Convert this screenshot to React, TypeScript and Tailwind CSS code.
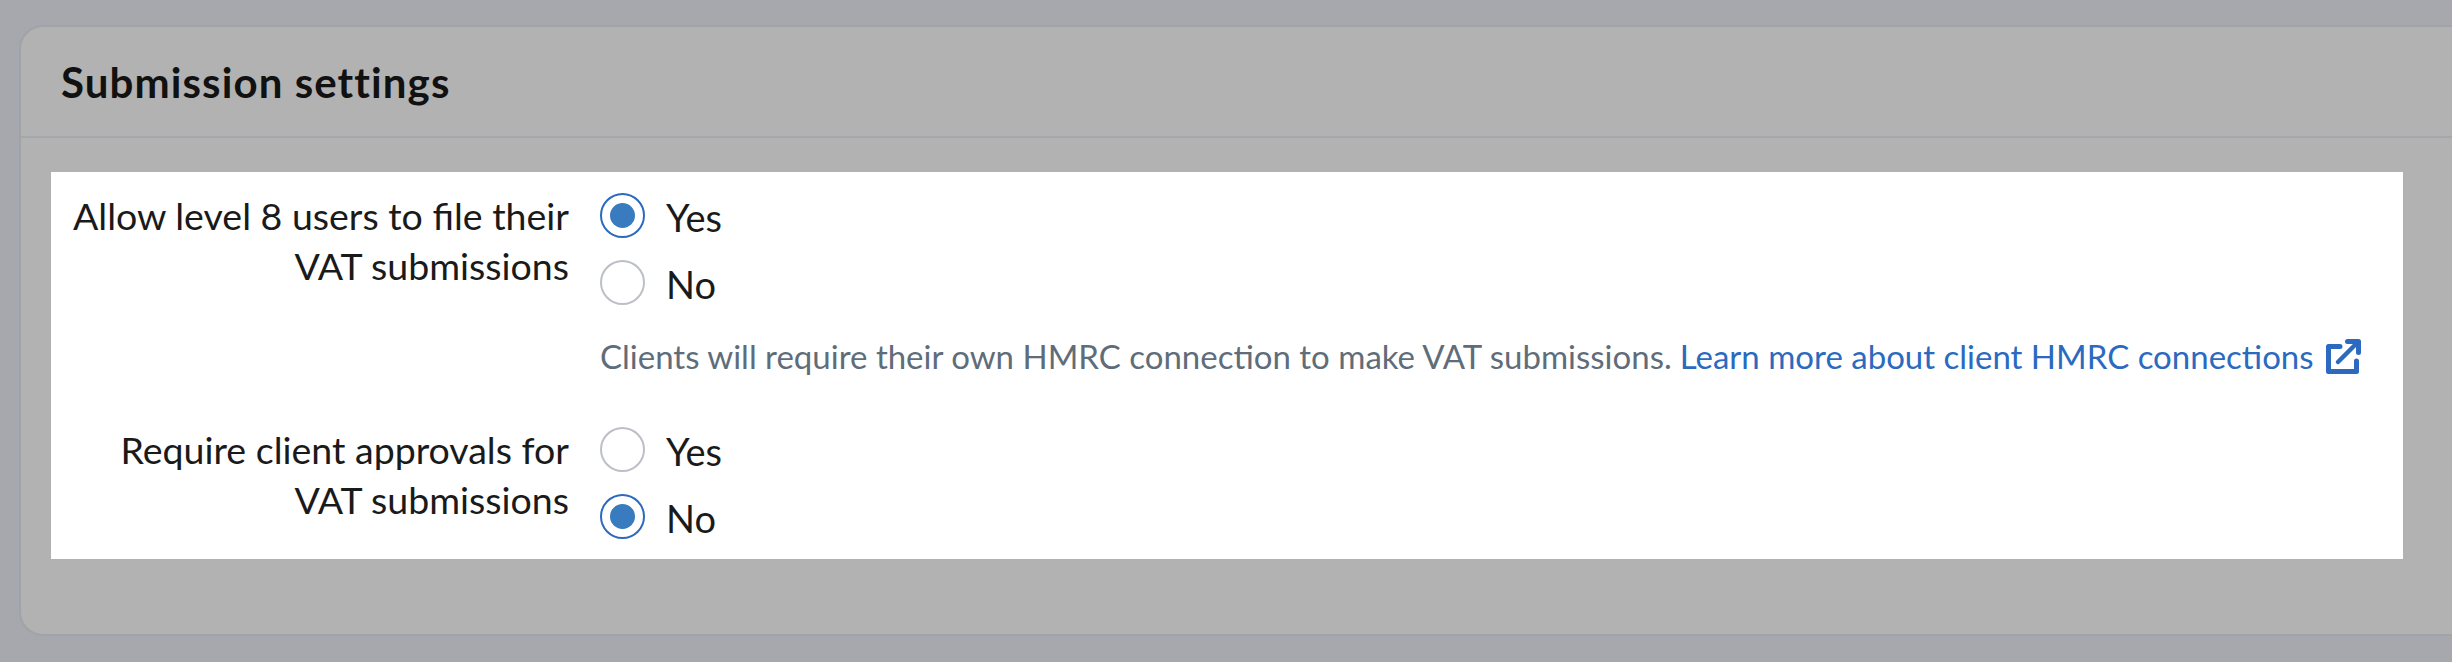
const font = "font-['Lato','Liberation_Sans',sans-serif]";

function Radio({ label, checked }: { label: string; checked?: boolean }) {
  return (
    <div className="flex h-[45px] items-center">
      <span
        className={`flex h-[45px] w-[45px] shrink-0 items-center justify-center rounded-full border-[2px] bg-white ${
          checked ? "border-[#2b6abf]" : "border-[#bcc0c6]"
        }`}
      >
        {checked && <span className="h-[25px] w-[25px] rounded-full bg-[#387bbf]" />}
      </span>
      <span className="ml-[21px] pt-[3px] text-[38px] leading-[50px] text-[#1a1a1a]">{label}</span>
    </div>
  );
}

function Row({ lines, checked, children }: { lines: string[]; checked: "yes" | "no"; children?: React.ReactNode }) {
  return (
    <div className="flex">
      <div className="-mt-[2px] w-[518px] shrink-0 text-right text-[37.5px] leading-[50px] text-[#1a1a1a]">
        {lines.map((l) => (
          <div key={l}>{l}</div>
        ))}
      </div>
      <div className="ml-[31px] flex flex-col gap-[22px]">
        <Radio label="Yes" checked={checked === "yes"} />
        <Radio label="No" checked={checked === "no"} />
        {children}
      </div>
    </div>
  );
}

export default function App() {
  return (
    <div className={`h-[662px] w-[2452px] overflow-hidden bg-[#a6a8ae] pt-[25px] pl-[19px] ${font}`}>
      <div className="h-[611px] rounded-l-[24px] border-y-[2px] border-l-[2px] border-[#a2a3a7] bg-[#b2b2b2]">
        <div className="flex h-[111px] items-center border-b-[2px] border-[#a6a7ac] pl-[40px]">
          <h2 className="text-[42px] font-bold leading-none tracking-[1.1px] text-[#111111]">Submission settings</h2>
        </div>
        <div className="ml-[30px] mt-[34px] h-[387px] w-[2352px] bg-white pt-[21px]">
          <Row lines={["Allow level 8 users to file their", "VAT submissions"]} checked="yes">
            <div className="mt-[12px] flex h-[35px] items-center whitespace-nowrap text-[33px] text-[#5f6d7a]">
              <span>Clients will require their own HMRC connection to make VAT submissions.</span>
              <a className="ml-[8px] text-[#2b6abf]">Learn more about client HMRC connections</a>
              <svg
                viewBox="0 0 35 35"
                className="ml-[12px] h-[35px] w-[35px] shrink-0"
                fill="none"
                stroke="#2b6abf"
                strokeLinecap="round"
                strokeLinejoin="round"
              >
                <path d="M14 7.5H2.5V32.5H30.5V22" strokeWidth="5" />
                <path d="M12 23 31 4" strokeWidth="4.5" />
                <path d="M21.5 2.5H32.5V13.5" strokeWidth="5" />
              </svg>
            </div>
          </Row>
          <div className="mt-[53px]">
            <Row lines={["Require client approvals for", "VAT submissions"]} checked="no" />
          </div>
        </div>
      </div>
    </div>
  );
}
